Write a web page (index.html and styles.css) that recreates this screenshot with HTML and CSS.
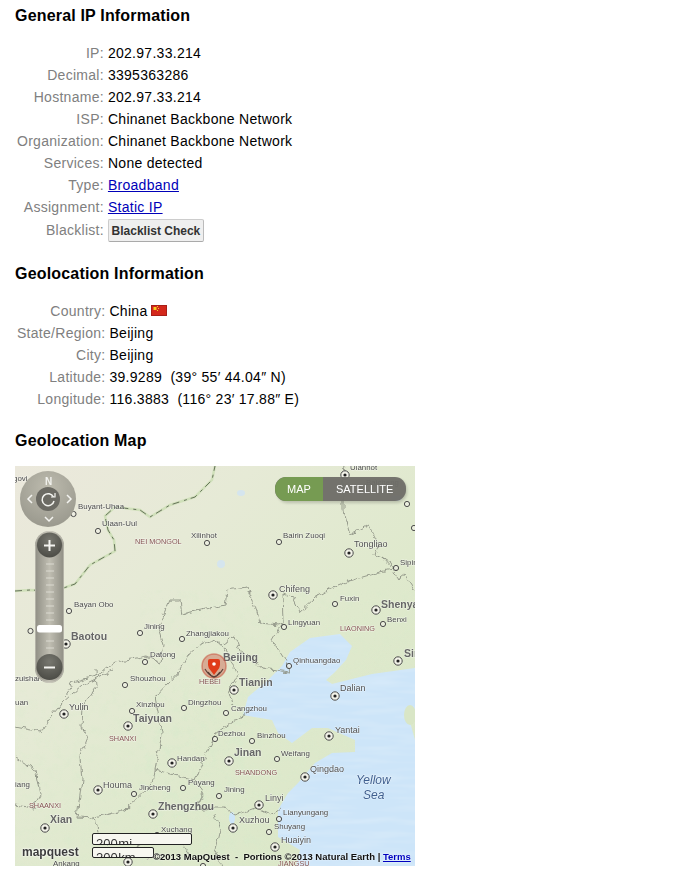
FILE: index.html
```html
<!DOCTYPE html>
<html lang="en">
<head>
<meta charset="utf-8">
<title>IP Information</title>
<link rel="stylesheet" href="styles.css">
</head>
<body>
<main class="page">
  <h2 class="title">General IP Information</h2>
  <dl class="info">
    <dt>IP:</dt><dd>202.97.33.214</dd>
    <dt>Decimal:</dt><dd>3395363286</dd>
    <dt>Hostname:</dt><dd>202.97.33.214</dd>
    <dt>ISP:</dt><dd>Chinanet Backbone Network</dd>
    <dt>Organization:</dt><dd>Chinanet Backbone Network</dd>
    <dt>Services:</dt><dd>None detected</dd>
    <dt>Type:</dt><dd><a href="#">Broadband</a></dd>
    <dt>Assignment:</dt><dd><a href="#">Static IP</a></dd>
    <dt>Blacklist:</dt><dd><button class="check" type="button">Blacklist Check</button></dd>
  </dl>

  <h2 class="title second">Geolocation Information</h2>
  <dl class="info">
    <dt>Country:</dt>
    <dd class="country">China
      <svg class="flag" width="16" height="11" viewBox="0 0 16 11" aria-hidden="true">
        <rect width="16" height="11" fill="#d4281b"/>
        <rect x=".5" y=".5" width="15" height="10" fill="none" stroke="#a81f18"/>
        <rect x="2.500" y="2" width="3" height="3" fill="#f5d020"/>
        <rect x="6" y="1" width="1" height="1" fill="#f5d020"/>
        <rect x="7" y="3" width="1" height="1" fill="#f5d020"/>
        <rect x="6" y="5" width="1" height="1" fill="#f5d020"/>
      </svg>
    </dd>
    <dt>State/Region:</dt><dd>Beijing</dd>
    <dt>City:</dt><dd>Beijing</dd>
    <dt>Latitude:</dt><dd>39.9289&nbsp; (39° 55′ 44.04″ N)</dd>
    <dt>Longitude:</dt><dd>116.3883&nbsp; (116° 23′ 17.88″ E)</dd>
  </dl>

  <h2 class="title third">Geolocation Map</h2>
  <div class="map">
    <svg class="map-art" width="400" height="400" viewBox="15 466 400 400" aria-label="Map of northern China">
      <defs>
        <linearGradient id="land" x1="0" y1="0" x2="1" y2="1">
          <stop offset="0" stop-color="#ebe8dc"/>
          <stop offset=".3" stop-color="#e6ead6"/>
          <stop offset=".6" stop-color="#dfe9cd"/>
          <stop offset="1" stop-color="#d9e6c6"/>
        </linearGradient>
        <filter id="hills" x="0" y="0" width="100%" height="100%">
          <feTurbulence type="fractalNoise" baseFrequency=".11" numOctaves="3" seed="7"/>
          <feColorMatrix values="0 0 0 0 .68  0 0 0 0 .82  0 0 0 0 .6  1.400 0 0 0 -.6"/>
        </filter>
        <filter id="waves" x="0" y="0" width="100%" height="100%">
          <feTurbulence type="fractalNoise" baseFrequency=".02 .16" numOctaves="2" seed="3"/>
          <feColorMatrix values="0 0 0 0 1  0 0 0 0 1  0 0 0 0 1  1.200 0 0 0 -.45"/>
        </filter>
        <filter id="soft" x="-5%" y="-5%" width="110%" height="110%"><feGaussianBlur stdDeviation=".3"/></filter>
        <filter id="softer" x="-20%" y="-20%" width="140%" height="140%"><feGaussianBlur stdDeviation="1.500"/></filter>
        <filter id="rough" x="-5%" y="-5%" width="110%" height="110%">
          <feTurbulence type="fractalNoise" baseFrequency=".14" numOctaves="2" seed="11" result="n"/>
          <feDisplacementMap in="SourceGraphic" in2="n" scale="7" xChannelSelector="R" yChannelSelector="G"/>
          <feGaussianBlur stdDeviation=".3"/>
        </filter>
        <clipPath id="seaclip"><path id="seashape" d="M282 666L290 652 310 638 340 634 352 646 346 660 335 672 326 680 332 684 372 674 415 668V712L410 722 415 740V866H296L300 850 278 837 278 810 288 793 298 783 315 763 332 753 355 752 355 740 328 728 312 728 292 743 278 733 272 720 243 715 248 697 268 680Z"/></clipPath>
        <radialGradient id="compass" cx=".5" cy=".3" r=".75"><stop offset="0" stop-color="#bdbbae"/><stop offset="1" stop-color="#98978c"/></radialGradient>
        <linearGradient id="rail" x1="0" y1="0" x2="1" y2="0"><stop offset="0" stop-color="#8f8e84"/><stop offset=".5" stop-color="#c0beb2"/><stop offset="1" stop-color="#8f8e84"/></linearGradient>
        <radialGradient id="knob" cx=".5" cy=".3" r=".7"><stop offset="0" stop-color="#77776f"/><stop offset="1" stop-color="#4c4c46"/></radialGradient>
        <g id="c"><circle r="2.600" fill="#f2f2e8" fill-opacity=".6" stroke="#4a4a4a" stroke-width="1"/></g>
        <g id="t"><circle r="4.200" fill="#f2f2e8" stroke="#4a4a4a" stroke-width="1"/><circle r="1.600" fill="#222"/></g>
      </defs>

      <rect x="15" y="466" width="400" height="400" fill="url(#land)"/>
      <g filter="url(#soft)">
        <rect x="140" y="590" width="275" height="276" filter="url(#hills)" opacity=".5"/>
        <rect x="15" y="690" width="240" height="176" filter="url(#hills)" opacity=".5"/>
        <use href="#seashape" fill="#cde5f9"/>
        <rect x="240" y="630" width="175" height="236" filter="url(#waves)" clip-path="url(#seaclip)" opacity=".3"/>
        <ellipse cx="241" cy="493" rx="4" ry="3" fill="#d5e5ee"/>
        <ellipse cx="221" cy="564" rx="4" ry="4" fill="#d5e5ee"/>
        <ellipse cx="396" cy="498" rx="6" ry="3" fill="#d5e5ee"/>
        <ellipse cx="232" cy="818" rx="3" ry="6" fill="#cde5f9"/>
        <ellipse cx="410" cy="715" rx="6" ry="10" fill="#d9e6c6"/>
      </g>

      <g class="borders" filter="url(#rough)">
        <path d="M382 558L397 568 380 572 352 580 332 588 315 598 300 612 293 597 282 593 283 622 278 625 260 623 255 605 247 587 227 590 225 605 215 607 192 612 182 615 180 600 170 600 165 612 158 628 163 645 160 662 147 656 115 662 98 675 73 682 65 695"/>
        <path d="M345 466L343 480 343 510 350 535 368 525 378 545 375 555 382 558 395 572 398 580 405 575 415 590"/>
        <path d="M95 670L96 687 83 707 82 727 88 737 80 757 82 780 77 817 95 818 125 810 153 783 155 770 162 733 155 697 168 683 180 670 188 655"/>
        <path d="M15 727L42 732 48 720 62 703 82 685 113 670"/>
        <path d="M15 757L35 770 40 795 33 808 15 805"/>
        <path d="M155 770L175 775 195 780 203 760 215 735 232 722 248 712"/>
        <path d="M283 622L272 640 285 660 290 672 262 668 240 650 235 636 222 645 232 660 238 676 228 690 232 705"/>
        <path d="M188 655L200 645 215 640 222 645"/>
        <path d="M195 780L203 795 195 810 215 808 225 808 235 815 255 808 270 815 280 808"/>
        <path d="M215 815L220 830 215 850 222 866"/>
        <path d="M95 818L100 840 120 855 150 842 180 840 190 855"/>
      </g>
      <path class="natl-glow" d="M15 591L30 590 55 591 75 584 90 565 115 551 114 540 108 530 105 516 115 507 140 510 150 517 170 505 195 497 212 480 215 466"/>
      <path class="natl" d="M15 591L30 590 55 591 75 584 90 565 115 551 114 540 108 530 105 516 115 507 140 510 150 517 170 505 195 497 212 480 215 466"/>

      <g filter="url(#soft)">
        <use href="#c" x="73.500" y="514"/><use href="#c" x="98" y="531"/><use href="#c" x="207" y="543"/>
        <use href="#c" x="69" y="611"/><use href="#c" x="30.500" y="631"/><use href="#t" x="66" y="644"/>
        <use href="#c" x="140" y="633"/><use href="#c" x="182" y="639"/><use href="#c" x="145" y="662"/>
        <use href="#c" x="125" y="685"/><use href="#t" x="345" y="475"/><use href="#c" x="407" y="504"/>
        <use href="#c" x="414" y="528"/><use href="#c" x="279" y="542"/><use href="#t" x="349" y="553"/>
        <use href="#c" x="396" y="568"/><use href="#t" x="273" y="595"/><use href="#c" x="335" y="604"/>
        <use href="#t" x="376" y="610"/><use href="#c" x="383" y="624"/><use href="#c" x="284" y="627"/>
        <use href="#c" x="289" y="666"/><use href="#t" x="398" y="661"/><use href="#t" x="64" y="714"/>
        <use href="#c" x="132" y="711"/><use href="#c" x="184" y="708"/><use href="#t" x="128" y="726"/>
        <use href="#t" x="172" y="763"/><use href="#t" x="98" y="790"/><use href="#c" x="134" y="794"/>
        <use href="#c" x="183" y="788"/><use href="#t" x="153" y="814"/><use href="#t" x="45" y="828"/>
        <use href="#c" x="157" y="835"/><use href="#t" x="128" y="862"/><use href="#t" x="234" y="690"/>
        <use href="#t" x="335" y="696"/><use href="#c" x="226" y="713"/><use href="#c" x="215" y="739"/>
        <use href="#c" x="252" y="741"/><use href="#t" x="329" y="736"/><use href="#c" x="277" y="759"/>
        <use href="#t" x="229" y="761"/><use href="#t" x="305" y="777"/><use href="#c" x="219" y="796"/>
        <use href="#t" x="259" y="805"/><use href="#c" x="279" y="819"/><use href="#t" x="233" y="828"/>
        <use href="#c" x="269" y="832"/><use href="#t" x="275" y="847"/><use href="#c" x="203" y="866"/>
      </g>

      <g class="lbl" filter="url(#soft)">
        <text x="13" y="481">govi</text><text x="78" y="509">Buyant-Uhaa</text><text x="102" y="526">Ulaan-Uul</text>
        <text x="191" y="538">Xilinhot</text><text x="283" y="538">Bairin Zuoqi</text><text x="350" y="470">Ulanhot</text>
        <text x="366" y="485">Baicheng</text><text x="400" y="565">Sipin</text><text x="340" y="601">Fuxin</text>
        <text x="387" y="622">Benxi</text><text x="288" y="625">Lingyuan</text><text x="293" y="663">Qinhuangdao</text>
        <text x="74" y="607">Bayan Obo</text><text x="35" y="627">Wuhai</text><text x="144" y="629">Jining</text>
        <text x="186" y="636">Zhangjiakou</text><text x="150" y="657">Datong</text><text x="130" y="681">Shouzhou</text>
        <text x="15" y="681">zuishan</text><text x="136" y="707">Xinzhou</text><text x="188" y="705">Dingzhou</text>
        <text x="15" y="705">uan</text><text x="177" y="761">Handan</text><text x="139" y="790">Jincheng</text>
        <text x="188" y="785">Puyang</text><text x="15" y="787">iang</text><text x="161" y="832">Xuchang</text>
        <text x="53" y="866">Ankang</text><text x="231" y="711">Cangzhou</text><text x="218" y="736">Dezhou</text>
        <text x="257" y="738">Binzhou</text><text x="281" y="756">Weifang</text><text x="224" y="792">Jining</text>
        <text x="283" y="815">Lianyungang</text><text x="274" y="829">Shuyang</text>
      </g>
      <g class="lbl mid" filter="url(#soft)">
        <text x="279" y="592">Chifeng</text><text x="354" y="547">Tongliao</text><text x="69" y="710">Yulin</text>
        <text x="103" y="788">Houma</text><text x="340" y="691">Dalian</text><text x="335" y="733">Yantai</text>
        <text x="310" y="772">Qingdao</text><text x="265" y="801">Linyi</text><text x="239" y="823">Xuzhou</text>
        <text x="281" y="843">Huaiyin</text>
      </g>
      <g class="lbl big" filter="url(#soft)">
        <text x="71" y="640">Baotou</text><text x="381" y="608">Shenyang</text><text x="223" y="661">Beijing</text>
        <text x="239" y="686">Tianjin</text><text x="133" y="722">Taiyuan</text><text x="158" y="810">Zhengzhou</text>
        <text x="50" y="823">Xian</text><text x="234" y="756">Jinan</text><text x="404" y="657">Sin</text>
      </g>
      <g class="prov" filter="url(#soft)">
        <text x="135" y="544">NEI MONGOL</text><text x="340" y="631">LIAONING</text><text x="199" y="684">HEBEI</text>
        <text x="109" y="741">SHANXI</text><text x="29" y="808">SHAANXI</text><text x="235" y="775">SHANDONG</text>
        <text x="140" y="844" class="faint">HENAN</text><text x="133" y="858" class="faint">Nanyang</text><text x="278" y="866">JIANGSU</text>
      </g>
      <g class="sea-lbl"><text x="356" y="784">Yellow</text><text x="363" y="799">Sea</text></g>

      <g class="marker">
        <circle cx="214" cy="666" r="12" fill="#c8503c" fill-opacity=".4" stroke="#c8503c" stroke-opacity=".55" stroke-width="1.500"/>
        <path d="M208 672Q210 676 214 677Q218 676 220 672" fill="none" stroke="#5a4038" stroke-width="1.500"/>
        <path d="M205 669Q208 674 211 675M223 669Q220 674 217 675" fill="none" stroke="#5a4038" stroke-width="1.200"/>
        <path d="M210 659H218Q220 659 220 661V665Q220 668 217 671L214 675 211 671Q208 668 208 665V661Q208 659 210 659Z" fill="#e03c1a"/>
        <circle cx="214" cy="664" r="1.800" fill="#fff"/>
      </g>

      <g class="controls">
        <circle cx="48" cy="499" r="28" fill="url(#compass)"/>
        <circle cx="48" cy="499" r="12" fill="#6c6b64"/>
        <path d="M53.500 497A6 6 0 1 0 54 501" class="ctl-line"/>
        <path d="M51 497H55V493" class="ctl-line thin"/>
        <text x="48.500" y="485" class="compass-n">N</text>
        <path d="M32 495L28 499 32 503M67 495L71 499 67 503M45 517L49 521 53 517" class="ctl-line"/>

        <rect x="35" y="531" width="29" height="152" rx="14.500" fill="url(#rail)"/>
        <rect x="35.500" y="531.500" width="28" height="151" rx="14" fill="none" stroke="#d5d3c8" stroke-opacity=".5"/>
        <path class="ticks" d="M46 564H54M46 571H54M46 578H54M46 585H54M46 592H54M46 599H54M46 606H54M46 613H54M46 620H54M46 641H54M46 648H54"/>
        <circle cx="49.500" cy="545" r="12.500" fill="url(#knob)"/>
        <path d="M44 545.500H55M49.500 540V551" class="ctl-line wide"/>
        <circle cx="49.500" cy="667" r="13" fill="url(#knob)"/>
        <path d="M44 667.500H55" class="ctl-line wide"/>
        <rect x="37" y="625" width="25" height="7.500" rx="2.500" fill="#fff"/>
      </g>

      <g class="switch">
        <rect x="277" y="479" width="130" height="24" rx="11" fill="#000" opacity=".18" filter="url(#softer)"/>
        <rect x="275" y="477" width="131" height="24" rx="11" fill="#6f6e68" fill-opacity=".95"/>
        <path d="M323 477H286A11 12 0 0 0 286 501H323Z" fill="#769b52"/>
        <text x="287" y="492.500">MAP</text>
        <text x="336" y="492.500">SATELLITE</text>
      </g>
    </svg>

    <div class="scale scale-mi"><span>200 mi</span></div>
    <div class="scale scale-km"><span>200 km</span></div>
    <span class="logo">mapquest</span>
    <p class="credit">©2013 MapQuest&nbsp; -&nbsp; Portions ©2013 Natural Earth | <a href="#">Terms</a></p>
  </div>
</main>
</body>
</html>
```

FILE: styles.css
```css
* { box-sizing: border-box; }
html, body { margin: 0; background: #fff; }
body { font-family: "Liberation Sans", Arial, sans-serif; font-size: 14px; color: #000; }
.page { padding: 7px 15px 0; }
.title { margin: 0; font-size: 16px; line-height: 18px; font-weight: bold; letter-spacing: .18px; }
.second { margin-top: 23px; }
.third { margin-top: 22px; }
.info {
  display: grid;
  grid-template-columns: max-content max-content;
  column-gap: 4px;
  margin: 17px 0 0;
  padding-left: 2px;
  line-height: 22px;
  letter-spacing: .28px;
  align-items: center;
}
.info dt { color: #808080; text-align: right; }
.info dd { margin: 0; height: 22px; }
.info dd:last-child:has(.check) { height: 24px; }
.info a { color: #0000b8; }
.country { display: flex; align-items: center; gap: 4px; }
.flag { display: block; margin-top: -1px; }
.check {
  display: block;
  width: 96px;
  height: 23px;
  margin-top: 1px;
  padding: 0;
  font: bold 12px "Liberation Sans", Arial, sans-serif;
  color: #333;
  background: #efefef;
  border: 1px solid #ccc;
  border-right-color: #bbb;
  border-bottom-color: #aaa;
  border-radius: 2px;
}
.map { position: relative; width: 400px; height: 400px; margin-top: 16px; overflow: hidden; }
.map-art { display: block; }
.borders path { fill: none; stroke: #8f9386; stroke-width: .9; stroke-linejoin: round; }
.natl-glow { fill: none; stroke: #d0e0ba; stroke-width: 2.500; }
.natl { fill: none; stroke: #5b6650; stroke-width: .9; stroke-dasharray: 7 5 3 4; }
.lbl text, .prov text, .sea-lbl text {
  paint-order: stroke;
  stroke: rgba(255, 255, 255, .5);
  stroke-width: 1px;
  stroke-linejoin: round;
}
.lbl { font: 7.900px "Liberation Sans", Arial, sans-serif; fill: #4a4a4a; }
.lbl.mid { font-size: 9px; fill: #525252; }
.lbl.big { font-size: 10.500px; font-weight: bold; fill: #666; }
.prov { font: 7.300px "Liberation Sans", Arial, sans-serif; fill: #835250; }
.prov .faint { fill: #b9b0b0; stroke: none; }
.sea-lbl { font: italic 12px "Liberation Sans", Arial, sans-serif; fill: #3f5f8f; }
.compass-n { font: bold 10px "Liberation Sans", Arial, sans-serif; fill: #f2f2ee; text-anchor: middle; }
.ctl-line { fill: none; stroke: #f4f4f0; stroke-width: 1.500; }
.ctl-line.thin { stroke-width: 1.200; }
.ctl-line.wide { stroke-width: 2; }
.ticks { stroke: #e4e3da; stroke-width: 1; opacity: .8; }
.switch text { font: 11px "Liberation Sans", Arial, sans-serif; fill: #fff; }
.scale {
  position: absolute;
  height: 12px;
  background: #f7f7f0;
  border: 1px solid #222;
  border-radius: 2px;
  overflow: hidden;
  font-size: 13px;
  line-height: 14px;
  padding-left: 3px;
  color: #333;
}
.scale span { display: block; margin-top: 3px; word-spacing: -3px; }
.scale-mi { left: 77px; top: 367px; width: 100px; }
.scale-km { left: 77px; top: 381px; width: 62px; height: 11px; }
.logo {
  position: absolute;
  left: 7px;
  top: 378px;
  font: bold 12px/16px "Liberation Sans", Arial, sans-serif;
  color: #3c3c3c;
  text-shadow: 0 0 2px #fff, 0 0 2px #fff;
}
.credit {
  position: absolute;
  left: 138px;
  top: 385px;
  margin: 0;
  white-space: nowrap;
  font: bold 9.500px/12px "Liberation Sans", Arial, sans-serif;
  color: #111;
  text-shadow: 0 0 2px #fff;
}
.credit a { color: #0000c0; }
```
